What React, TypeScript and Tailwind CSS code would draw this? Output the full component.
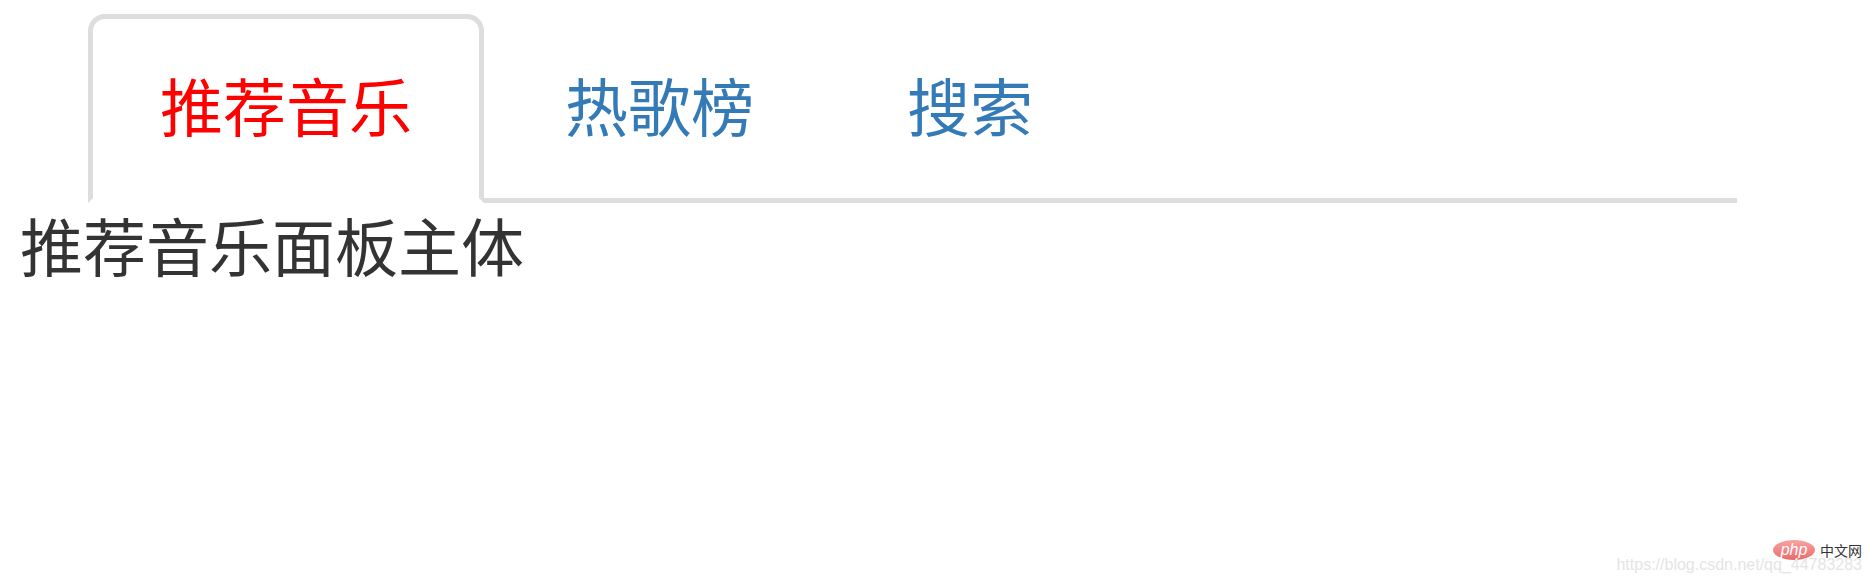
import React, { useState } from 'react';

const tabs = ['推荐音乐', '热歌榜', '搜索'];

const App: React.FC = () => {
  const [active, setActive] = useState<number>(0);

  return (
    <div className="relative h-[583px] w-full overflow-hidden bg-white font-['Noto_Sans_CJK_SC','Noto_Sans',sans-serif]">
      <ul className="ml-[88px] mt-[14px] flex w-[1649px] border-b-[5px] border-[#ddd]">
        {tabs.map((tab, index) => (
          <li key={tab} className="-mb-[5px] mr-[9px]">
            <a
              href="#"
              onClick={(e) => {
                e.preventDefault();
                setActive(index);
              }}
              className={
                index === active
                  ? 'block rounded-t-[17px] border-[5px] border-[#ddd] border-b-transparent bg-white px-[67px] pt-[41px] pb-[51px] text-[63px] leading-[87px] text-[#ff0000]'
                  : 'block rounded-t-[17px] border-[5px] border-transparent px-[67px] pt-[41px] pb-[51px] text-[63px] leading-[87px] text-[#337ab7]'
              }
            >
              {tab}
            </a>
          </li>
        ))}
      </ul>

      <div className="pl-[20px] text-[63px] leading-[81px] text-[#333]">
        {tabs[active]}面板主体
      </div>

      {/* watermark */}
      <div className="absolute left-[1773px] top-[540px] flex items-center">
        <span className="flex h-[20px] w-[42px] items-center justify-center rounded-[50%] bg-gradient-to-b from-[#f7a3a3] to-[#e96a6a] font-['Liberation_Sans',sans-serif] text-[16px] italic leading-none text-white">
          php
        </span>
        <span className="ml-[5px] text-[14px] leading-none text-[#333]">中文网</span>
      </div>
      <div className="absolute right-[11px] top-[556px] font-['Liberation_Sans',sans-serif] text-[16px] leading-[18px] text-[#e4e4e4]">
        https://blog.csdn.net/qq_44783283
      </div>
    </div>
  );
};

export default App;
